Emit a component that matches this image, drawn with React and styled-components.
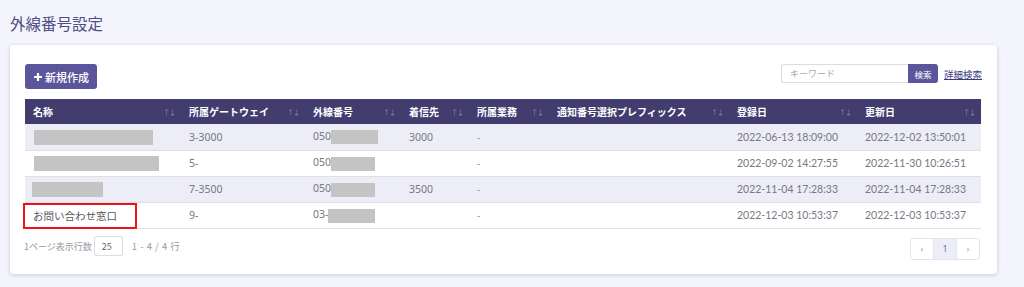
import React from "react";
import styled, { createGlobalStyle } from "styled-components";

const Global = createGlobalStyle`
  html, body { margin: 0; padding: 0; background: #f4f4fc; }
  body { font-family: "Noto Sans", "Noto Sans CJK JP", sans-serif; }
`;

const Page = styled.div`
  padding: 12px 26px 14px 10px;
  height: 287px;
  box-sizing: border-box;
  overflow: hidden;
`;

const Title = styled.h1`
  margin: 0 0 11px;
  font-size: 15.5px;
  font-weight: 400;
  color: #4e4c80;
  line-height: 22px;
  font-family: "Noto Sans CJK JP", sans-serif;
`;

const Card = styled.div`
  background: #fff;
  border-radius: 4px;
  box-shadow: 0 1px 4px rgba(60, 60, 110, 0.22);
  padding: 19px 16px 14px 15px;
  width: 987px;
  box-sizing: border-box;
`;

const Toolbar = styled.div`
  display: flex;
  justify-content: space-between;
  align-items: flex-start;
  height: 25px;
  margin-bottom: 10px;
`;

const PrimaryButton = styled.button`
  display: flex;
  align-items: center;
  gap: 2px;
  height: 25px;
  padding: 0 8px 0 8px;
  border: none;
  border-radius: 3px;
  background: #5b559b;
  color: #fff;
  font-size: 11px;
  font-family: "Noto Sans CJK JP", sans-serif;
  font-weight: 500;
`;

const Search = styled.div`
  display: flex;
  align-items: center;
  margin-right: -1px;
`;

const SearchInput = styled.input`
  width: 127px;
  height: 19px;
  box-sizing: border-box;
  border: 1px solid #dcdce6;
  border-right: none;
  border-radius: 3px 0 0 3px;
  padding: 0 8px;
  font-size: 9px;
  font-family: "Noto Sans CJK JP", sans-serif;
  outline: none;
  &::placeholder { color: #a8a8b4; }
`;

const SearchButton = styled.button`
  height: 19px;
  width: 30px;
  border: none;
  border-radius: 0 3px 3px 0;
  background: #5b559b;
  color: #fff;
  font-size: 8.5px;
  padding: 0;
  font-family: "Noto Sans CJK JP", sans-serif;
`;

const AdvancedLink = styled.a`
  margin-left: 6px;
  font-size: 9.5px;
  color: #3e3a7e;
  text-decoration: underline;
  font-family: "Noto Sans CJK JP", sans-serif;
`;

const Table = styled.table`
  width: 956px;
  border-collapse: collapse;
  table-layout: fixed;
  font-size: 10.5px;
`;

const Th = styled.th`
  position: relative;
  height: 25px;
  padding: 0 8px;
  background: #423d6e;
  color: #fff;
  font-size: 10px;
  font-weight: 700;
  text-align: left;
  font-family: "Noto Sans CJK JP", sans-serif;
  white-space: nowrap;
`;

const SortIcon = styled.span`
  position: absolute;
  right: 6px;
  top: 50%;
  transform: translateY(-50%);
  font-size: 7px;
  color: #8e8ab0;
  letter-spacing: -1px;
  font-weight: 400;
`;

const Tr = styled.tr`
  background: ${(p) => (p.$striped ? "#ededf7" : "#fff")};
`;

const Td = styled.td`
  height: 26px;
  box-sizing: border-box;
  padding: 0 8px;
  border-bottom: 1px solid #dedee4;
  color: ${(p) => (p.$muted ? "#a0a0aa" : "#77777f")};
  font-family: ${(p) => (p.$date ? "Lato, 'Noto Sans', sans-serif" : "'Noto Sans', 'Noto Sans CJK JP', sans-serif")};
  font-size: 10.5px;
  white-space: nowrap;
  position: relative;
`;

const Redact = styled.span`
  display: inline-block;
  vertical-align: middle;
  background: #c4c4c4;
  height: ${(p) => p.$h || 14}px;
  width: ${(p) => p.$w}px;
  margin-left: ${(p) => p.$ml || 0}px;
`;

const Highlight = styled.span`
  position: absolute;
  left: -2px;
  top: 0;
  width: 114px;
  height: 26px;
  border: 2px solid #e8141c;
  box-sizing: border-box;
`;

const NameText = styled.span`
  color: #55555f;
  font-family: "Noto Sans CJK JP", sans-serif;
`;

const Footer = styled.div`
  display: flex;
  justify-content: space-between;
  align-items: center;
  margin-top: 4px;
`;

const PerPage = styled.div`
  display: flex;
  align-items: center;
  gap: 7px;
  font-size: 9px;
  color: #9a9aa6;
  font-family: "Noto Sans CJK JP", sans-serif;
  margin-left: -1px;
`;

const PerPageInput = styled.div`
  width: 29px;
  height: 20px;
  box-sizing: border-box;
  border: 1px solid #dcdce4;
  border-radius: 2px;
  display: flex;
  align-items: center;
  padding-left: 7px;
  font-size: 9px;
  color: #666;
  margin-left: -5px;
`;

const RangeText = styled.span`
  font-size: 9.5px;
  margin-left: 2px;
  word-spacing: 1px;
`;

const Pager = styled.div`
  display: flex;
  border: 1px solid #e4e4ee;
  border-radius: 3px;
  overflow: hidden;
  margin-top: 5px;
  margin-right: 1px;
`;

const PageButton = styled.div`
  width: 22px;
  height: 20px;
  display: flex;
  align-items: center;
  justify-content: center;
  font-size: 9px;
  color: ${(p) => (p.$active ? "#6d6d9a" : "#9a9ab0")};
  background: ${(p) => (p.$active ? "#ededf7" : "#fff")};
  border-left: ${(p) => (p.$first ? "none" : "1px solid #e4e4ee")};
  font-family: "Noto Sans", sans-serif;
`;

const columns = [
  { label: "名称", w: 156 },
  { label: "所属ゲートウェイ", w: 124 },
  { label: "外線番号", w: 96 },
  { label: "着信先", w: 68 },
  { label: "所属業務", w: 80 },
  { label: "通知番号選択プレフィックス", w: 180 },
  { label: "登録日", w: 128 },
  { label: "更新日", w: 124 },
];

const rows = [
  { name: { w: 119, ml: 1 }, gw: "3-3000", pre: "050", num: 47, dest: "3000", reg: "2022-06-13 18:09:00", upd: "2022-12-02 13:50:01" },
  { name: { w: 125, ml: 1 }, gw: "5-", pre: "050", num: 44, dest: "", reg: "2022-09-02 14:27:55", upd: "2022-11-30 10:26:51" },
  { name: { w: 71, ml: -1 }, gw: "7-3500", pre: "050", num: 44, dest: "3500", reg: "2022-11-04 17:28:33", upd: "2022-11-04 17:28:33" },
  { text: "お問い合わせ窓口", gw: "9-", pre: "03-", num: 47, dest: "", reg: "2022-12-03 10:53:37", upd: "2022-12-03 10:53:37" },
];

function PlusIcon() {
  return (
    <svg width="10" height="10" viewBox="0 0 10 10">
      <path d="M5 1v8M1 5h8" stroke="#fff" strokeWidth="2.2" />
    </svg>
  );
}

export default function App() {
  return (
    <>
      <Global />
      <Page>
        <Title>外線番号設定</Title>
        <Card>
          <Toolbar>
            <PrimaryButton>
              <PlusIcon />
              新規作成
            </PrimaryButton>
            <Search>
              <SearchInput placeholder="キーワード" />
              <SearchButton>検索</SearchButton>
              <AdvancedLink>詳細検索</AdvancedLink>
            </Search>
          </Toolbar>
          <Table>
            <colgroup>
              {columns.map((c) => (
                <col key={c.label} style={{ width: c.w }} />
              ))}
            </colgroup>
            <thead>
              <tr>
                {columns.map((c) => (
                  <Th key={c.label}>
                    {c.label}
                    <SortIcon>↑↓</SortIcon>
                  </Th>
                ))}
              </tr>
            </thead>
            <tbody>
              {rows.map((r, i) => (
                <Tr key={i} $striped={i % 2 === 0}>
                  <Td>
                    {r.text ? (
                      <>
                        <Highlight />
                        <NameText>{r.text}</NameText>
                      </>
                    ) : (
                      <Redact $w={r.name.w} $ml={r.name.ml} $h={15} />
                    )}
                  </Td>
                  <Td>{r.gw}</Td>
                  <Td>
                    {r.pre}
                    <Redact $w={r.num} $h={14} />
                  </Td>
                  <Td>{r.dest}</Td>
                  <Td $muted>-</Td>
                  <Td />
                  <Td $date>{r.reg}</Td>
                  <Td $date>{r.upd}</Td>
                </Tr>
              ))}
            </tbody>
          </Table>
          <Footer>
            <PerPage>
              1ページ表示行数
              <PerPageInput>25</PerPageInput>
              <RangeText>1 - 4 / 4 行</RangeText>
            </PerPage>
            <Pager>
              <PageButton $first>‹</PageButton>
              <PageButton $active>1</PageButton>
              <PageButton>›</PageButton>
            </Pager>
          </Footer>
        </Card>
      </Page>
    </>
  );
}
